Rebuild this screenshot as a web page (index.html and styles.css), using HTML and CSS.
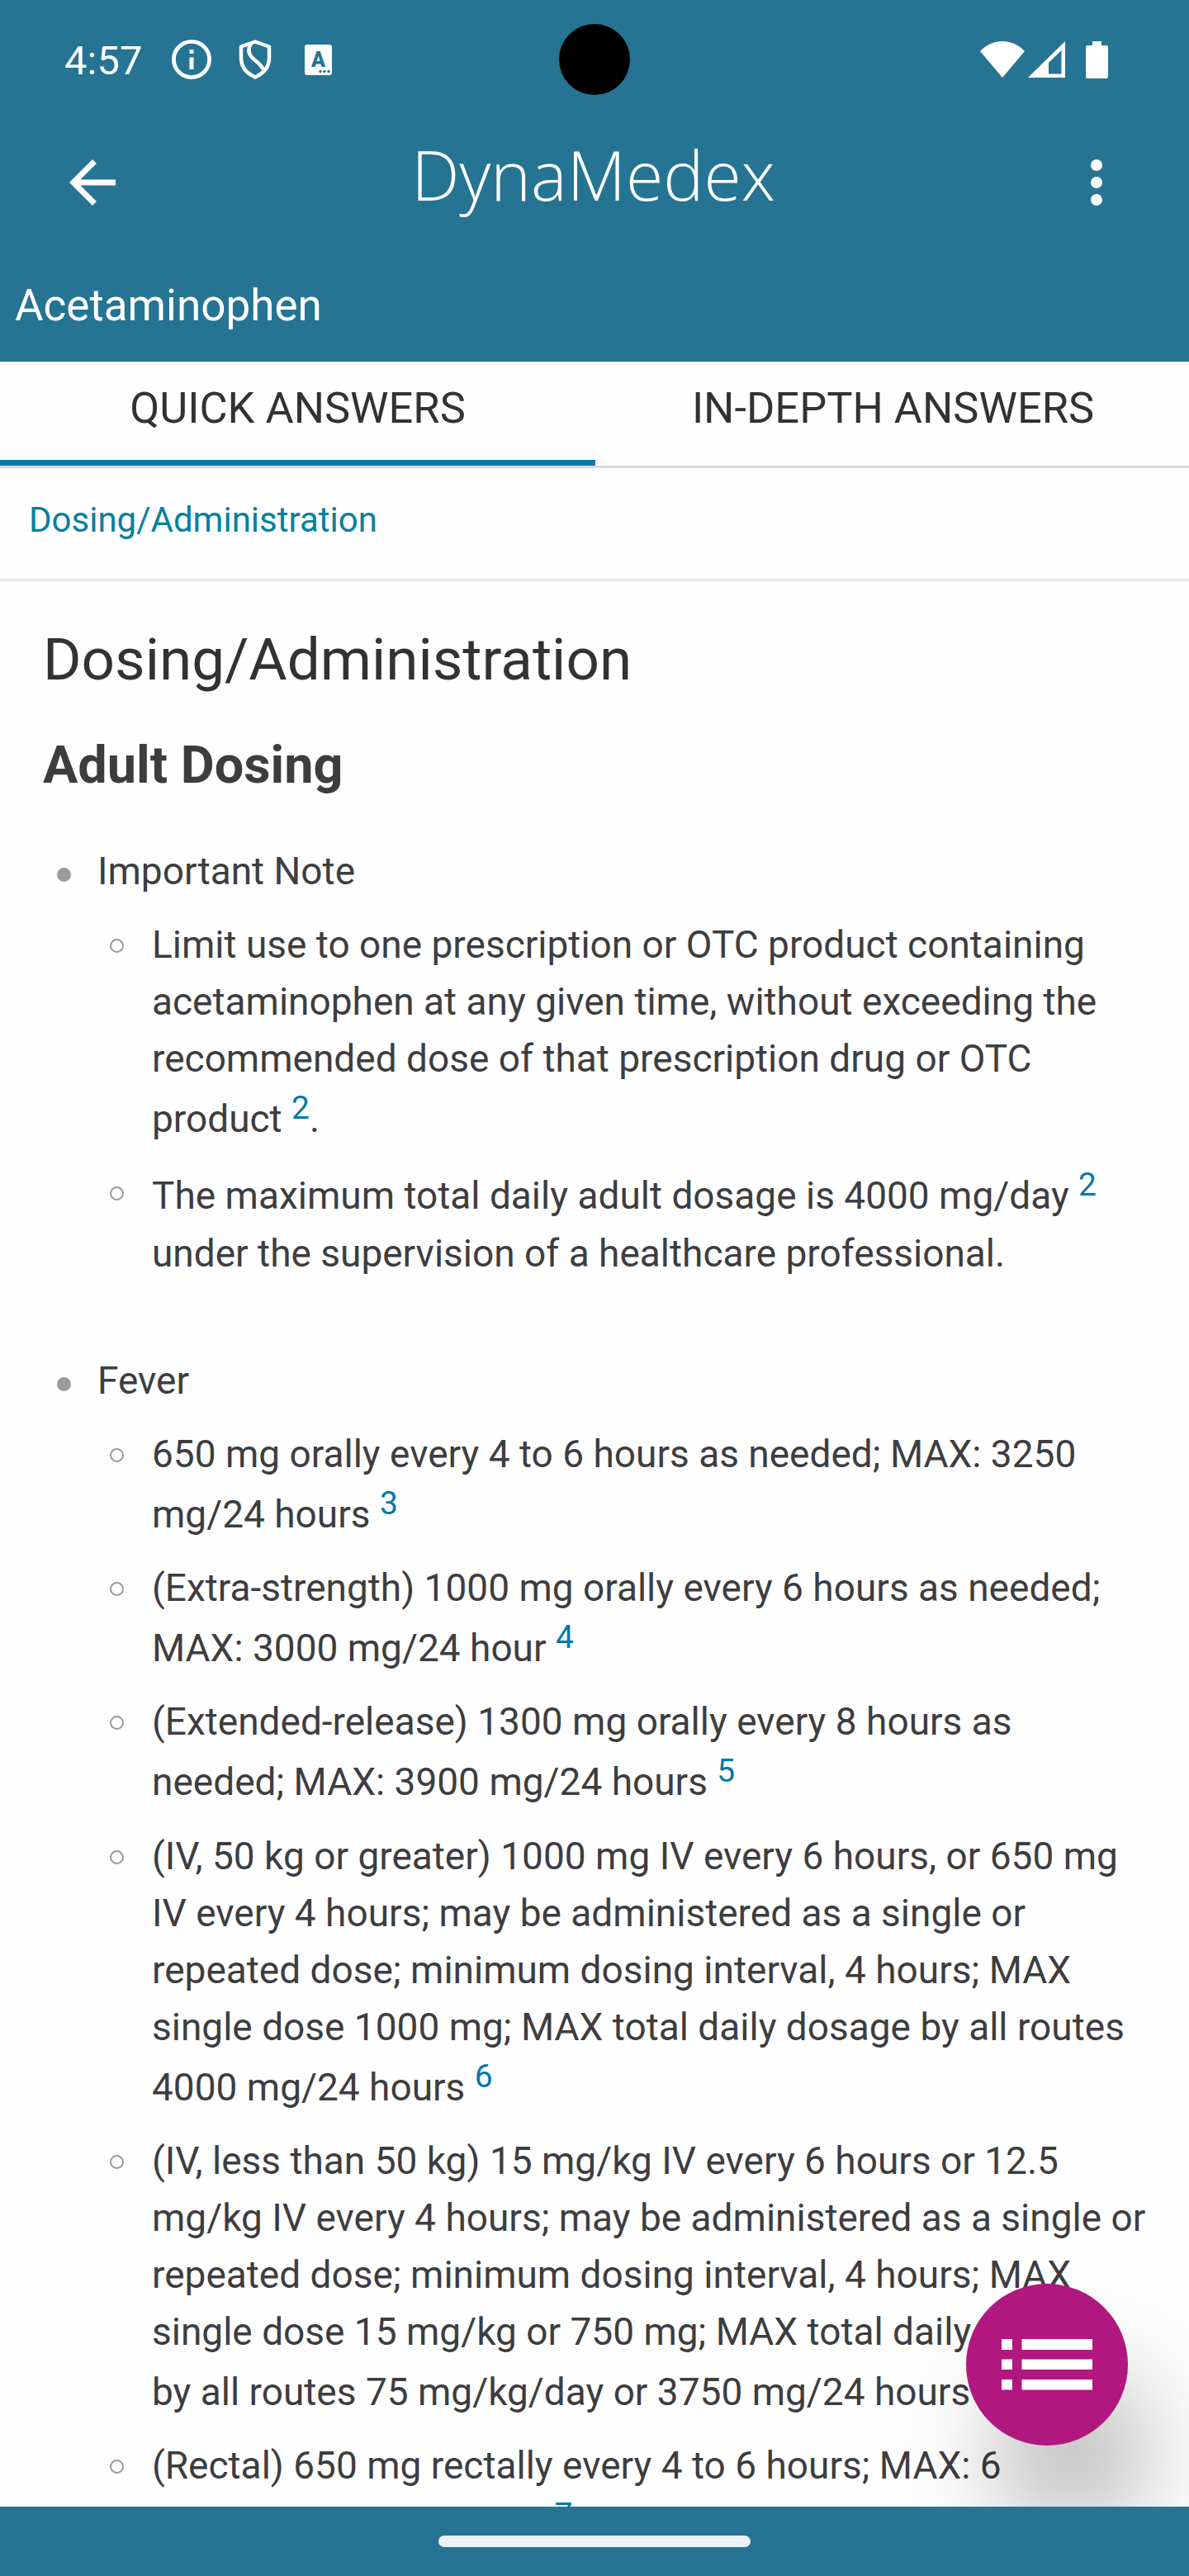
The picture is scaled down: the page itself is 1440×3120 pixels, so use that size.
FILE: index.html
```
<!DOCTYPE html>
<html lang="en">
<head>
  <meta charset="UTF-8">
  <meta name="viewport" content="width=device-width, initial-scale=1.0">
  <title>DynaMedex - Acetaminophen</title>
  <link rel="stylesheet" href="styles.css">
</head>
<body>

  <header class="header">
    <div class="status-bar">
      <div class="status-left">
        <span class="time">4:57</span>
        <svg class="info-icon" viewBox="0 0 48 48">
          <circle cx="24" cy="24" r="21.6" fill="none" stroke="#fff" stroke-width="4.8"/>
          <rect x="21.5" y="12" width="5" height="5" fill="#fff"/>
          <rect x="21.5" y="21.5" width="5" height="14.5" fill="#fff"/>
        </svg>
        <svg class="shield-icon" viewBox="0 0 40 48">
          <path d="M20 2.5 L37 8.500 V22 C37 33 30 41 20 45.500 C10 41 3 33 3 22 V8.500 Z" fill="none" stroke="#fff" stroke-width="4.500" stroke-linejoin="round"/>
          <path d="M15 5 C11 11 12 17 16 21.500 C20 26 27 29 29.500 36" fill="none" stroke="#fff" stroke-width="4.500"/>
        </svg>
        <svg class="keyboard-icon" viewBox="0 0 33 37">
          <rect width="33" height="37" rx="3" fill="#fff"/>
          <text x="16.5" y="26.5" text-anchor="middle">A</text>
          <circle cx="19" cy="32.500" r="1.700"/>
          <circle cx="24" cy="32.500" r="1.700"/>
          <circle cx="29" cy="32.500" r="1.700"/>
        </svg>
      </div>
      <div class="camera"></div>
      <div class="status-right">
        <svg class="wifi-icon" viewBox="0 0 54 44">
          <path d="M27 44 L0 12 C15 -4 39 -4 54 12 Z" fill="#fff"/>
        </svg>
        <svg class="signal-icon" viewBox="0 0 45 44">
          <path d="M45 0 V44 H0 Z M40.500 11 L25 26 V39.500 H40.500 Z" fill="#fff" fill-rule="evenodd"/>
        </svg>
        <svg class="battery-icon" viewBox="0 0 27 45">
          <path d="M8 0 H19 V5 H25 Q27 5 27 7 V43 Q27 45 25 45 H2 Q0 45 0 43 V7 Q0 5 2 5 H8 Z" fill="#fff"/>
        </svg>
      </div>
    </div>

    <div class="app-bar">
      <svg class="bar-icon" viewBox="0 0 24 24">
        <path d="M20 11H7.830l5.590-5.590L12 4l-8 8 8 8 1.410-1.410L7.830 13H20v-2z" fill="#fff"/>
      </svg>
      <div class="logo">DynaMedex</div>
      <svg class="bar-icon" viewBox="0 0 24 24">
        <circle cx="12" cy="6" r="2" fill="#fff"/>
        <circle cx="12" cy="12" r="2" fill="#fff"/>
        <circle cx="12" cy="18" r="2" fill="#fff"/>
      </svg>
    </div>

    <div class="drug-name">Acetaminophen</div>
  </header>

  <nav class="tabs">
    <a class="tab active">QUICK ANSWERS</a>
    <a class="tab">IN-DEPTH ANSWERS</a>
  </nav>

  <div class="breadcrumb"><a>Dosing/Administration</a></div>

  <main class="content">
    <h1>Dosing/Administration</h1>
    <h2>Adult Dosing</h2>

    <ul class="topics">
      <li>Important Note
        <ul class="details">
          <li>Limit use to one prescription or OTC product containing acetaminophen at any given time, without exceeding the recommended dose of that prescription drug or OTC product <sup>2</sup>.</li>
          <li>The maximum total daily adult dosage is 4000 mg/day <sup>2</sup> under the supervision of a healthcare professional.</li>
        </ul>
      </li>
      <li>Fever
        <ul class="details">
          <li>650 mg orally every 4 to 6 hours as needed; MAX: 3250 mg/24 hours <sup>3</sup></li>
          <li>(Extra-strength) 1000 mg orally every 6 hours as needed; MAX: 3000 mg/24 hour <sup>4</sup></li>
          <li>(Extended-release) 1300 mg orally every 8 hours as needed; MAX: 3900 mg/24 hours <sup>5</sup></li>
          <li>(IV, 50 kg or greater) 1000 mg IV every 6 hours, or 650 mg IV every 4 hours; may be administered as a single or repeated dose; minimum dosing interval, 4 hours; MAX single dose 1000 mg; MAX total daily dosage by all routes 4000 mg/24 hours <sup>6</sup></li>
          <li>(IV, less than 50 kg) 15 mg/kg IV every 6 hours or 12.5 mg/kg IV every 4 hours; may be administered as a single or repeated dose; minimum dosing interval, 4 hours; MAX single dose 15 mg/kg or 750 mg; MAX total daily dosage by all routes 75 mg/kg/day or 3750 mg/24 hours <sup>6</sup></li>
          <li>(Rectal) 650 mg rectally every 4 to 6 hours; MAX: 6 suppositories/24 hours <sup>7</sup></li>
        </ul>
      </li>
    </ul>

    <button class="menu-btn" aria-label="Contents">
      <svg viewBox="0 0 110 62">
        <path d="M0 0h13v13H0z M24.500 0H110v13H24.500z M0 24.500h13v12.500H0z M24.500 24.500H110v12.500H24.500z M0 49h13v12.500H0z M24.500 49H110v12.500H24.500z" fill="#fff"/>
      </svg>
    </button>
  </main>

  <footer class="nav-bar"><div class="handle"></div></footer>

</body>
</html>
```

FILE: styles.css
```
*,
*::before {
  margin: 0;
  padding: 0;
  box-sizing: border-box;
}

body {
  font-family: Roboto, sans-serif;
  background-color: #fefefe;
  color: #3d3d40;
  width: 1440px;
  height: 3120px;
  display: flex;
  flex-direction: column;
  overflow: hidden;
}

.header {
  background-color: #257493;
  color: #fff;
  height: 438px;
  flex-shrink: 0;
}

.status-bar {
  height: 144px;
  display: flex;
  align-items: center;
  justify-content: space-between;
  padding: 0 98px 0 78px;
  position: relative;
}

.status-left,
.status-right {
  display: flex;
  align-items: center;
}

.time {
  font-size: 49px;
  width: 130px;
  padding-top: 3px;
}

.info-icon {
  width: 48px;
  height: 48px;
  margin-right: 33px;
}

.shield-icon {
  width: 40px;
  height: 48px;
  margin-right: 40px;
}

.keyboard-icon {
  width: 33px;
  height: 37px;
  fill: #257493;
  font-size: 25px;
  font-weight: 900;
}

.camera {
  position: absolute;
  left: 677px;
  top: 29px;
  width: 86px;
  height: 86px;
  border-radius: 50%;
  background-color: #000;
}

.wifi-icon {
  width: 54px;
  height: 44px;
  margin-right: 4px;
}

.signal-icon {
  width: 45px;
  height: 44px;
  margin-right: 25px;
}

.battery-icon {
  width: 27px;
  height: 45px;
}

.app-bar {
  height: 154px;
  display: flex;
  align-items: center;
  justify-content: space-between;
  padding: 0 70px;
}

.bar-icon {
  width: 84px;
  height: 84px;
}

.logo {
  font-family: "Open Sans", sans-serif;
  font-weight: 300;
  font-size: 82.5px;
  line-height: 100px;
  padding: 0 3px 21px 0;
}

.drug-name {
  font-size: 53px;
  line-height: 60px;
  padding: 42px 18px 0;
}

.tabs {
  display: flex;
  height: 129px;
  flex-shrink: 0;
  border-bottom: 3px solid #d9d9d9;
}

.tab {
  flex: 0 0 721px;
  text-align: center;
  font-size: 52.4px;
  line-height: 60px;
  padding-top: 26px;
  color: #323232;
}

.tab.active {
  border-bottom: 7px solid #0578a8;
}

.breadcrumb {
  height: 137px;
  flex-shrink: 0;
  padding: 38px 35px;
  font-size: 42px;
  line-height: 50px;
  color: #0580a0;
  border-bottom: 3px solid #e7e7ef;
}

.content {
  flex: 1;
  min-height: 0;
  overflow: hidden;
  position: relative;
  padding: 53px 52px 0;
}

h1 {
  font-size: 71px;
  font-weight: 400;
  line-height: 84px;
  color: #323232;
}

h2 {
  font-size: 63px;
  font-weight: 700;
  line-height: 76px;
  margin-top: 48px;
}

ul {
  list-style: none;
}

.topics {
  margin-top: 56px;
  font-size: 46px;
  line-height: 69px;
}

.topics > li {
  padding-left: 66px;
  margin-bottom: 85px;
  position: relative;
}

.details li {
  padding-left: 66px;
  margin-top: 20px;
  position: relative;
}

.topics > li::before,
.details li::before {
  content: "";
  position: absolute;
  left: 17px;
  top: 30px;
  width: 17px;
  height: 17px;
  border-radius: 50%;
  background-color: #9b9b9b;
}

.details li::before {
  top: 27px;
  left: 15px;
  background: none;
  border: 2.5px solid #9b9b9b;
}

sup {
  font-size: 39px;
  line-height: 50px;
  color: #0578a8;
}

.menu-btn {
  position: absolute;
  left: 1170px;
  top: 2062px;
  width: 196px;
  height: 196px;
  border: none;
  border-radius: 50%;
  background-color: #b1177f;
  box-shadow: 30px 105px 120px rgba(0, 0, 0, 0.25);
  display: flex;
  align-items: center;
  justify-content: center;
}

.menu-btn svg {
  width: 110px;
  height: 62px;
}

.nav-bar {
  height: 84px;
  flex-shrink: 0;
  background-color: #257493;
  display: flex;
  align-items: center;
  justify-content: center;
}

.handle {
  width: 378px;
  height: 14px;
  border-radius: 7px;
  background-color: #ecf2f7;
}
```
